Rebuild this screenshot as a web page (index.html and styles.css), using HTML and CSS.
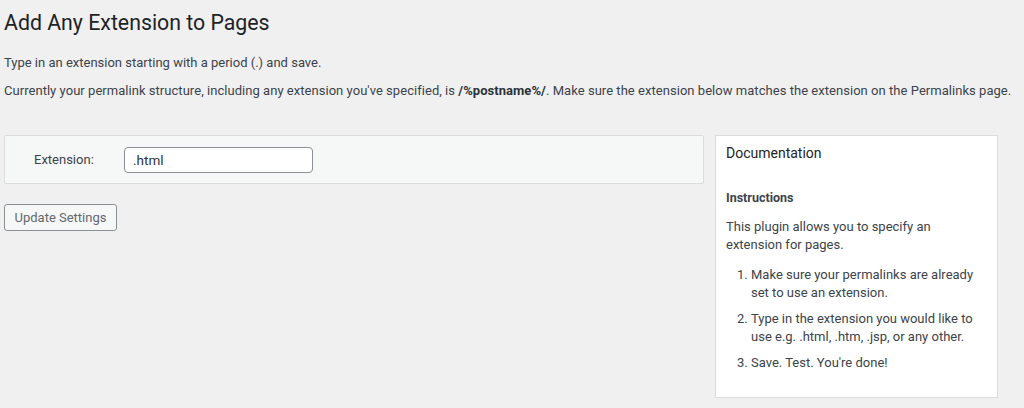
FILE: index.html
```html
<!DOCTYPE html>
<html>
<head>
<meta charset="utf-8">
<link rel="stylesheet" href="styles.css">
</head>
<body>
<div class="wrap">
  <h1 class="title">Add Any Extension to Pages</h1>
  <p class="intro">Type in an extension starting with a period (.) and save.</p>
  <p class="intro">Currently your permalink structure, including any extension you've specified, is <strong>/%postname%/</strong>. Make sure the extension below matches the extension on the Permalinks page.</p>
  <div class="columns">
    <div class="main">
      <div class="settings">
        <label class="label">Extension:</label>
        <div class="input">.html</div>
      </div>
      <button class="button">Update Settings</button>
    </div>
    <div class="docs">
      <h2 class="docs-title">Documentation</h2>
      <h3 class="docs-sub">Instructions</h3>
      <p class="docs-text">This plugin allows you to specify an extension for pages.</p>
      <ol class="steps">
        <li>Make sure your permalinks are already set to use an extension.</li>
        <li>Type in the extension you would like to use e.g. .html, .htm, .jsp, or any other.</li>
        <li>Save. Test. You're done!</li>
      </ol>
    </div>
  </div>
</div>
</body>
</html>
```

FILE: styles.css
```css
html, body {
  margin: 0;
  padding: 0;
  background: #f0f0f1;
}
body {
  font-family: "Roboto", "Liberation Sans", sans-serif;
  font-size: 13px;
  color: #3c434a;
}
.wrap {
  padding: 8px 0 0 4px;
  width: 1018px;
}
.title {
  margin: 0;
  font-size: 21.3px;
  font-weight: 400;
  line-height: 29px;
  color: #1d2327;
}
.intro {
  margin: 0;
  line-height: 18px;
  white-space: nowrap;
}
.intro:nth-of-type(1) { margin-top: 17px; }
.intro:nth-of-type(2) { margin-top: 10px; letter-spacing: 0.04px; }
.intro strong { font-weight: 700; color: #2c3338; }
.columns {
  display: flex;
  gap: 11px;
  margin-top: 35px;
  align-items: flex-start;
}
.main {
  width: 700px;
}
.settings {
  background: #f6f7f7;
  border: 1px solid #dcdcde;
  border-radius: 2px;
  display: flex;
  align-items: center;
  box-sizing: border-box;
  height: 49px;
}
.label {
  width: 90px;
  padding-left: 29px;
  color: #3c434a;
}
.input {
  width: 189px;
  height: 26px;
  box-sizing: border-box;
  border: 1px solid #8c8f94;
  border-radius: 4px;
  background: #fff;
  padding: 0 8px;
  line-height: 24px;
  color: #2c3338;
  font-size: 13.5px;
}
.button {
  margin-top: 20px;
  height: 27px;
  width: 113px;
  border: 1px solid #8c8f94;
  border-radius: 3px;
  background: #f6f7f7;
  color: #646970;
  font-family: inherit;
  font-size: 13px;
  padding: 0;
}
.docs {
  width: 283px;
  height: 263px;
  box-sizing: border-box;
  background: #fff;
  border: 1px solid #dcdcde;
  padding: 8px 10px;
}
.docs-title {
  margin: 0;
  font-size: 14px;
  font-weight: 400;
  color: #1d2327;
  line-height: 18px;
}
.docs-sub {
  margin: 27px 0 0;
  font-size: 12.5px;
  font-weight: 700;
  line-height: 18px;
  color: #3c434a;
}
.docs-text {
  margin: 11px 0 0;
  line-height: 18px;
}
.steps {
  margin: 12px 0 0;
  padding-left: 25px;
}
.steps li {
  line-height: 18px;
  margin-bottom: 8px;
}
```
